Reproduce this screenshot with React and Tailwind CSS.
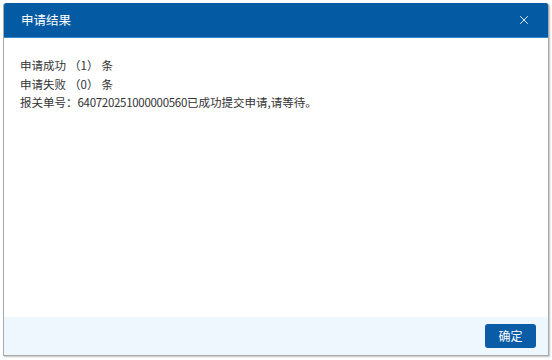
import React from 'react';
import { X } from 'lucide-react';

const font = { fontFamily: '"Noto Sans CJK SC", "Noto Sans", sans-serif' };

export default function App() {
  return (
    <div className="w-[552px] h-[360px] bg-white pt-[3px] pl-[3px]" style={font}>
      <div className="w-[546px] h-[353px] flex flex-col border border-[#a9a9a9] border-t-0 rounded-t-[3px] shadow-[1px_1px_2px_rgba(0,0,0,0.25)] overflow-hidden">
        <div className="h-[35px] shrink-0 bg-[#055ba3] border-b border-[#3a8ad0] flex items-center justify-between pl-[17px] pr-[17px]">
          <span className="text-white text-[12.5px]">申请结果</span>
          <X className="text-white w-[14px] h-[14px]" strokeWidth={1.5} />
        </div>
        <div className="flex-1 bg-white pl-[16px] pt-[18px] text-[11.5px] leading-[18.5px] text-[#333333]">
          <div>申请成功<span className="mx-[3px]">（1）</span>条</div>
          <div>申请失败<span className="mx-[3px]">（0）</span>条</div>
          <div>
            报关单号：<span className="tracking-[-0.3px]">640720251000000560</span>已成功提交申请,请等待。
          </div>
        </div>
        <div className="h-[38px] shrink-0 bg-[#eef7fe] flex items-center justify-end pr-[12px]">
          <button className="w-[51px] h-[24px] rounded-[3px] bg-[#0a5ca6] text-white text-[12px]">确定</button>
        </div>
      </div>
    </div>
  );
}
